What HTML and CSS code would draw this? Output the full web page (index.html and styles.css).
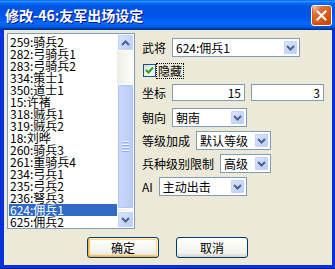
FILE: index.html
```html
<!DOCTYPE html>
<html lang="zh-CN">
<head>
    <meta charset="UTF-8">
    <title>修改-46:友军出场设定</title>
    <link rel="stylesheet" href="styles.css">
</head>
<body>

<div class="window">
    <div class="titlebar">
        <span class="title">修改-46:友军出场设定</span>
        <button class="close" type="button">
            <svg width="11" height="11" viewBox="0 0 11 11"><path d="M1.5 1.5 L9.5 9.5 M9.5 1.5 L1.5 9.5" stroke="#fff" stroke-width="2" stroke-linecap="square"/></svg>
        </button>
    </div>

    <div class="client">
        <div class="main">
            <div class="listbox">
                <ul class="items">
                    <li>259:骑兵2</li>
                    <li>282:弓骑兵1</li>
                    <li>283:弓骑兵2</li>
                    <li>334:策士1</li>
                    <li>350:道士1</li>
                    <li>15:许褚</li>
                    <li>318:贼兵1</li>
                    <li>319:贼兵2</li>
                    <li>18:刘晔</li>
                    <li>260:骑兵3</li>
                    <li>261:重骑兵4</li>
                    <li>234:弓兵1</li>
                    <li>235:弓兵2</li>
                    <li>236:弩兵3</li>
                    <li class="selected">624:佣兵1</li>
                    <li>625:佣兵2</li>
                </ul>
                <div class="scrollbar">
                    <div class="sb-btn">
                        <svg width="9" height="6" viewBox="0 0 9 6"><path d="M1 5 L4.5 1.5 L8 5" fill="none" stroke="#4d6185" stroke-width="2"/></svg>
                    </div>
                    <div class="sb-track">
                        <div class="sb-thumb">
                            <span class="grip"></span>
                            <span class="grip"></span>
                            <span class="grip"></span>
                            <span class="grip"></span>
                        </div>
                    </div>
                    <div class="sb-btn">
                        <svg width="9" height="6" viewBox="0 0 9 6"><path d="M1 1 L4.5 4.5 L8 1" fill="none" stroke="#4d6185" stroke-width="2"/></svg>
                    </div>
                </div>
            </div>

            <div class="form">
                <div class="row row-hero">
                    <span class="label">武将</span>
                    <div class="combo combo-hero">
                        <span class="value">624:佣兵1</span>
                        <span class="drop"><svg width="9" height="6" viewBox="0 0 9 6"><path d="M1 1 L4.5 4.5 L8 1" fill="none" stroke="#4d6185" stroke-width="2"/></svg></span>
                    </div>
                </div>

                <div class="row row-check">
                    <span class="checkbox">
                        <svg width="9" height="9" viewBox="0 0 9 9"><path d="M1 4 L3.5 6.5 L8 1.5" fill="none" stroke="#21a121" stroke-width="2"/></svg>
                    </span>
                    <span class="check-label">隐藏</span>
                </div>

                <div class="row row-pos">
                    <span class="label">坐标</span>
                    <div class="edit">15</div>
                    <div class="edit">3</div>
                </div>

                <div class="row row-face">
                    <span class="label">朝向</span>
                    <div class="combo combo-face">
                        <span class="value">朝南</span>
                        <span class="drop"><svg width="9" height="6" viewBox="0 0 9 6"><path d="M1 1 L4.5 4.5 L8 1" fill="none" stroke="#4d6185" stroke-width="2"/></svg></span>
                    </div>
                </div>

                <div class="row row-level">
                    <span class="label">等级加成</span>
                    <div class="combo combo-level">
                        <span class="value">默认等级</span>
                        <span class="drop"><svg width="9" height="6" viewBox="0 0 9 6"><path d="M1 1 L4.5 4.5 L8 1" fill="none" stroke="#4d6185" stroke-width="2"/></svg></span>
                    </div>
                </div>

                <div class="row row-limit">
                    <span class="label">兵种级别限制</span>
                    <div class="combo combo-limit">
                        <span class="value">高级</span>
                        <span class="drop"><svg width="9" height="6" viewBox="0 0 9 6"><path d="M1 1 L4.5 4.5 L8 1" fill="none" stroke="#4d6185" stroke-width="2"/></svg></span>
                    </div>
                </div>

                <div class="row row-ai">
                    <span class="label">AI</span>
                    <div class="combo combo-ai">
                        <span class="value">主动出击</span>
                        <span class="drop"><svg width="9" height="6" viewBox="0 0 9 6"><path d="M1 1 L4.5 4.5 L8 1" fill="none" stroke="#4d6185" stroke-width="2"/></svg></span>
                    </div>
                </div>
            </div>
        </div>

        <div class="buttons">
            <button type="button" class="btn btn-default">确定</button>
            <button type="button" class="btn">取消</button>
        </div>
    </div>
</div>

</body>
</html>
```

FILE: styles.css
```css
body {
    margin: 0;
    padding: 0;
    font-family: "Noto Sans CJK SC", "Liberation Sans", sans-serif;
    font-size: 12px;
}

.window {
    width: 335px;
    height: 269px;
    display: flex;
    flex-direction: column;
    background-color: #0831d9;
    box-sizing: border-box;
    border-bottom: 1px solid #001ea0;
}

.titlebar {
    height: 30px;
    flex: none;
    display: flex;
    align-items: center;
    padding: 0 3px 0 5px;
    background: linear-gradient(to bottom, #0058ee 0%, #3593ff 4%, #288eff 6%, #127dff 8%, #036ffc 10%, #0262ee 14%, #0057e5 20%, #0054e3 24%, #0055eb 56%, #005bf5 66%, #026afe 76%, #0062ef 86%, #0052d6 92%, #0040ab 94%, #003092 100%);
}

.title {
    flex: 1;
    color: white;
    font-weight: bold;
    font-size: 14px;
    line-height: 16px;
    text-shadow: 1px 1px #0f1089;
}

.close {
    width: 21px;
    height: 21px;
    padding: 0;
    border: 1px solid white;
    border-radius: 3px;
    display: flex;
    align-items: center;
    justify-content: center;
    background: radial-gradient(circle at 90% 90%, #cc4600 0%, #dc6527 55%, #cd7546 70%, #ffccb2 90%, white 100%);
    box-shadow: inset 0 -1px 2px 1px #da4600;
}

.client {
    flex: 1;
    margin: 0 3px 3px 4px;
    background-color: #ece9d8;
}

.main {
    display: flex;
    padding: 3px 0 0 3px;
}

/* list with scrollbar */
.listbox {
    width: 128px;
    height: 196px;
    box-sizing: border-box;
    border: 1px solid #7f9db9;
    background-color: white;
    display: flex;
    overflow: hidden;
}

.items {
    flex: 1;
    list-style: none;
    margin: 0;
    padding: 2px 0 0 1px;
}

.items li {
    height: 12px;
    line-height: 12px;
    padding-left: 1px;
    color: black;
    white-space: nowrap;
}

.items li.selected {
    background-color: #316ac5;
    color: white;
}

.scrollbar {
    width: 17px;
    display: flex;
    flex-direction: column;
    background: linear-gradient(to right, #eeede5, #fefefb);
}

.sb-btn {
    height: 17px;
    box-sizing: border-box;
    border: 1px solid #fff;
    border-radius: 2px;
    background: linear-gradient(to bottom right, #dce7fe, #b7cbf8);
    box-shadow: inset 0 0 0 1px #c3d3fd;
    display: flex;
    align-items: center;
    justify-content: center;
}

.sb-track {
    flex: 1;
    padding-top: 33px;
    padding-bottom: 2px;
    display: flex;
    flex-direction: column;
}

.sb-thumb {
    flex: 1;
    box-sizing: border-box;
    border: 1px solid #fff;
    border-radius: 2px;
    background: linear-gradient(to right, #c9d8fc, #b8cbf9);
    box-shadow: inset 0 0 0 1px #b0c4f5;
    display: flex;
    flex-direction: column;
    justify-content: center;
    align-items: center;
    gap: 1px;
}

.grip {
    width: 7px;
    height: 1px;
    background-color: #eef4fe;
    border-bottom: 1px solid #8cb0f8;
}

/* right side form */
.form {
    margin-left: 7px;
    padding-top: 5px;
}

.row {
    display: flex;
    align-items: center;
    gap: 6px;
    height: 19px;
    margin-bottom: 4px;
}

.row-check {
    gap: 1px;
    margin-bottom: 3px;
}

.row-pos {
    margin-bottom: 6px;
}

.label {
    color: black;
    line-height: 12px;
}

.combo {
    height: 19px;
    box-sizing: border-box;
    border: 1px solid #7f9db9;
    background-color: white;
    display: flex;
    align-items: center;
    padding: 1px;
}

.combo .value {
    flex: 1;
    padding-left: 2px;
    white-space: nowrap;
}

.drop {
    width: 15px;
    height: 15px;
    box-sizing: border-box;
    border: 1px solid #fff;
    border-radius: 2px;
    background: linear-gradient(to bottom right, #dce7fe, #b7cbf8);
    box-shadow: inset 0 0 0 1px #c3d3fd;
    display: flex;
    align-items: center;
    justify-content: center;
}

.combo-hero {
    width: 128px;
}

.combo-face {
    width: 75px;
}

.combo-level {
    width: 75px;
}

.combo-limit {
    width: 51px;
}

.combo-ai {
    width: 88px;
}

.checkbox {
    width: 13px;
    height: 13px;
    margin-left: 1px;
    box-sizing: border-box;
    border: 1px solid #1c5180;
    background: linear-gradient(to bottom right, #dcdcd7, #fff);
    display: flex;
    align-items: center;
    justify-content: center;
}

.check-label {
    padding: 0 1px;
    line-height: 14px;
    outline: 1px dotted #000;
}

.edit {
    width: 73px;
    height: 17px;
    box-sizing: border-box;
    border: 1px solid #7f9db9;
    background-color: white;
    text-align: right;
    padding-right: 3px;
    line-height: 15px;
}

/* bottom buttons */
.buttons {
    display: flex;
    gap: 17px;
    padding: 8px 0 0 83px;
}

.btn {
    width: 72px;
    height: 21px;
    padding: 0;
    border: 1px solid #003c74;
    border-radius: 3px;
    background: linear-gradient(to bottom, #ffffff, #f0f0ea 80%, #d6d0c5);
    font-family: "Noto Sans CJK SC", sans-serif;
    font-size: 12px;
    color: black;
}

.btn-default {
    box-shadow: inset -1px 1px #fff0cf, inset 1px -1px #f8b330, inset -2px 2px #fdd889, inset 2px -2px #fbc761;
}
```
